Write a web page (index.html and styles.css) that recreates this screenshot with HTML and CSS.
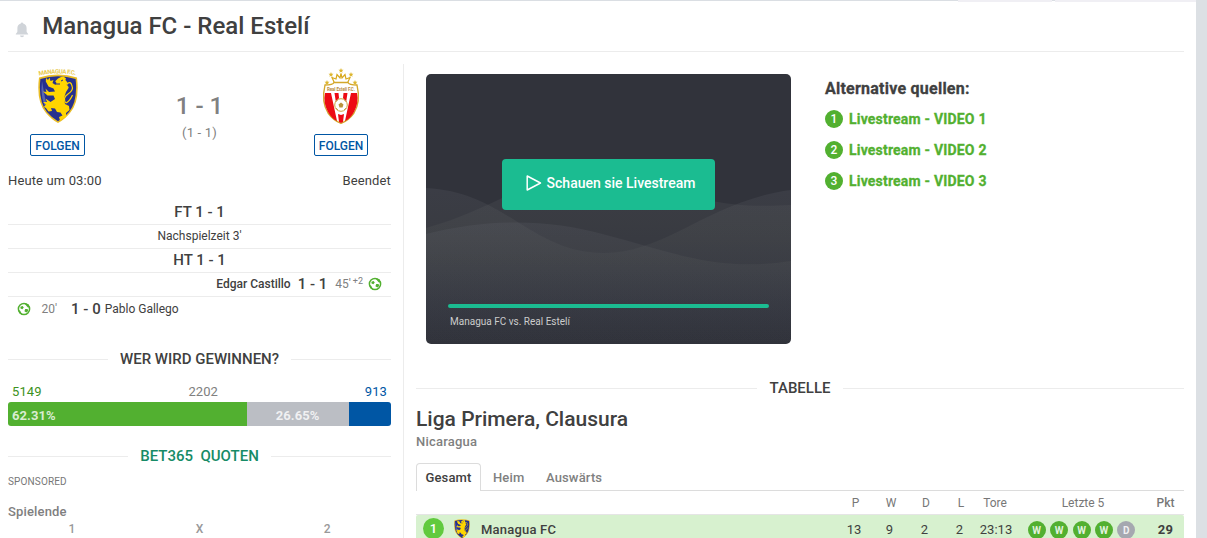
FILE: index.html
```html
<!DOCTYPE html>
<html lang="de">
<head>
<meta charset="utf-8">
<title>Managua FC - Real Estelí</title>
<link rel="stylesheet" href="styles.css">
</head>
<body>
<svg class="defs" width="0" height="0">
  <symbol id="ball" viewBox="0 0 14 14">
    <circle cx="7" cy="7" r="5.600" fill="#fff" stroke="#52b030" stroke-width="1.500"/>
    <path d="M3.400 4.800 5.600 4 6.800 5.600 5.400 7.300 3.500 6.600zM8.200 7 10.600 7 11.200 9 9.400 10.600 7.400 9.200zM7 1 11.400 2.200 13 5.800 10.600 5.200 8.900 3.200zM1 7.500 3.200 8.800 5.200 12.800 2.200 11z" fill="#52b030"/>
  </symbol>
  <symbol id="lion" viewBox="0 0 40 50">
    <path d="M1 3.5Q20-2.5 39 3.5Q42 28 32 39Q26 46 20 49Q14 46 8 39Q-2 28 1 3.5z" fill="#e9bd27"/>
    <path d="M2.400 5Q20-.5 37.600 5Q40 27 31 38Q26 44 20 47.300Q14 44 9 38Q0 27 2.400 5z" fill="#26308e"/>
    <path d="M4 7Q1.500 26 10 37L7 24z" fill="#5965b0"/>
    <path d="M20 4.500 23 3 25.500 2.600 28 4.500 27.400 6 29.500 8.500 28.500 11 30.500 14 28 18 26 24 27 30 31 32 31.500 36 28 39 28 43 22 46.500 21 43 24.500 41.500 22.500 38.500 19 38 17 34.500 13 34 14 37 10.500 37.500 8 34 5.800 33 8 30.500 5 28 9 28 7.500 24.500 12.500 28 17 25 15.500 21.500 9.500 21.500 5 17.500 8.500 18 7.500 14.500 11 18 17 17.500 15.500 14.500 10.500 12.500 7.800 7.500 8 4 10 6 11.500 3.500 12.500 7 15.500 6 14.500 9 17.500 11 18.500 9 17.200 7.200z" fill="#ffd500"/>
    <path d="M28 29Q24 24 30 20T34 12Q33 7 29.500 9.500Q27.500 12 30.500 13.500M28 29Q32 27 34.500 21" fill="none" stroke="#ffd500" stroke-width="1.200"/>
    <path d="M18 10h4M23 7l2-1" stroke="#26308e" stroke-width="1"/>
  </symbol>
</svg>
<div class="page">
  <div class="topline"><i class="topline-a"></i><i class="topline-b"></i></div>
  <header class="header">
    <svg class="bell" width="14" height="16" viewBox="0 0 14 16"><path d="M7 .5a1.200 1.200 0 0 1 1.200 1.100C10.600 2.200 11.600 4 11.600 6v3.500c0 1.200 1.700 1.800 1.700 3H.7c0-1.200 1.700-1.800 1.700-3V6c0-2 1-3.800 3.400-4.400A1.200 1.200 0 0 1 7 .5z" fill="#d0d4d9"/><path d="M5 13.500h4a2 1.800 0 0 1-4 0z" fill="#d0d4d9"/></svg>
    <h1>Managua FC - Real Estelí</h1>
  </header>
  <div class="columns">
    <section class="left">
      <div class="match">
        <div class="team">
          <svg width="50" height="60" viewBox="0 0 50 60">
            <defs><path id="arc" d="M6 9.500Q25 5.500 46 9.500"/></defs>
            <text class="crest-name" textLength="37"><textPath href="#arc" textLength="37">MANAGUA F.C.</textPath></text>
            <use href="#lion" x="5" y="8" width="40" height="50"/>
          </svg>
          <button class="follow">FOLGEN</button>
        </div>
        <div class="score"><b>1 - 1</b><span>(1 - 1)</span></div>
        <div class="team">
          <svg width="50" height="60" viewBox="0 0 50 60">
            <g fill="#ddb62e"><path d="M25 2l.7 1.700 1.800.1-1.400 1.200.5 1.800-1.600-1-1.600 1 .5-1.800-1.400-1.200 1.800-.1z"/><path id="st" d="M15 6l.7 1.700 1.800.1-1.400 1.200.5 1.800-1.600-1-1.600 1 .5-1.800-1.400-1.200 1.800-.1z"/><use href="#st" x="20"/><use href="#st" x="-4" y="8"/><use href="#st" x="24" y="8"/></g>
            <path d="M18.500 17 16 11.500 20 13 21 8.500 24 12 25 7.500 26 12 29 8.500 30 13 34 11.500 31.500 17z" fill="#fff" stroke="#d8a91d" stroke-width="1.200"/>
            <path d="M9 19Q17 19 18 16.500H32Q33 19 41 19Q45 36 38 47Q33 54 25 57.500Q17 54 12 47Q5 36 9 19z" fill="#fff" stroke="#d3a72b" stroke-width="1.300"/>
            <path d="M9 27h6l6 28Q16 53 12 46Q7 37 9 27zM41 27h-6l-6 28Q34 53 38 46Q43 37 41 27zM18.500 27h4l.5 5-3 5zM31.500 27h-4l-.5 5 3 5zM22 48l3 1 3-1-1 8-2 1-2-1z" fill="#ed0b13"/>
            <circle cx="25" cy="39" r="6.300" fill="#fff" stroke="#cda53c"/>
            <path d="M25 36.500l2.500 2-1 3h-3L22.500 38.500z" fill="#b9923b"/>
            <path d="M19.500 36l2-2M30.500 36l-2-2M20 42l2 2M30 42l-2 2" stroke="#b9923b" stroke-width=".8"/>
            <text class="crest-name crest-gold" x="11" y="24.500" textLength="28">Real Estelí F.C.</text>
          </svg>
          <button class="follow follow-away">FOLGEN</button>
        </div>
      </div>
      <div class="status"><span>Heute um 03:00</span><span>Beendet</span></div>
      <div class="events">
        <div class="event period">FT 1 - 1</div>
        <div class="event note">Nachspielzeit 3'</div>
        <div class="event period">HT 1 - 1</div>
        <div class="event away"><strong>Edgar Castillo</strong><b>1 - 1</b><span class="minute">45'<sup>+2</sup></span><svg width="14" height="14"><use href="#ball"/></svg></div>
        <div class="event home"><svg width="14" height="14"><use href="#ball"/></svg><span class="minute">20'</span><b>1 - 0</b><span>Pablo Gallego</span></div>
      </div>
      <h2 class="rule vote-title">WER WIRD GEWINNEN?</h2>
      <div class="counts"><span class="c1">5149</span><span>2202</span><span class="c2">913</span></div>
      <div class="bar"><div class="bar-home" style="width:62.31%">62.31%</div><div class="bar-draw" style="width:26.65%">26.65%</div><div class="bar-away"></div></div>
      <h2 class="rule odds-title">BET365&nbsp; QUOTEN</h2>
      <div class="sponsored">SPONSORED</div>
      <div class="market">Spielende</div>
      <div class="odds"><span>1</span><span>X</span><span>2</span></div>
      <div class="odds-box"></div>
    </section>
    <section class="right">
      <div class="media">
        <div class="player">
          <svg class="waves" width="365" height="270" viewBox="0 0 365 270">
            <defs><linearGradient id="g" x2="0" y2="1"><stop offset="0" stop-color="#6c6e7a" stop-opacity=".17"/><stop offset=".3" stop-color="#686b68" stop-opacity=".15"/><stop offset="1" stop-color="#555b70" stop-opacity="0"/></linearGradient></defs>
            <g fill="url(#g)">
              <path d="M0 114C80 118 105 179 178 179C240 179 285 126 365 116V270H0z"/>
              <path d="M0 154C70 135 105 99 170 98C235 96 250 138 365 131V270H0z"/>
              <path d="M0 160C60 145 120 144 180 161C240 176 290 199 365 187V270H0z"/>
            </g>
          </svg>
          <button class="watch"><svg width="18" height="18" viewBox="0 0 18 18"><path d="M2.200 2v14L15.500 9z" fill="none" stroke="#fff" stroke-width="1.500" stroke-linejoin="round"/></svg>Schauen sie Livestream</button>
          <div class="progress"></div>
          <div class="caption">Managua FC vs. Real Estelí</div>
        </div>
        <div class="sources">
          <h3>Alternative quellen:</h3>
          <a><i>1</i>Livestream - VIDEO 1</a>
          <a><i>2</i>Livestream - VIDEO 2</a>
          <a><i>3</i>Livestream - VIDEO 3</a>
        </div>
      </div>
      <h2 class="rule table-title">TABELLE</h2>
      <h3 class="league">Liga Primera, Clausura</h3>
      <div class="country">Nicaragua</div>
      <nav class="tabs"><span class="tab active">Gesamt</span><span class="tab heim">Heim</span><span class="tab">Auswärts</span></nav>
      <div class="trow thead"><span></span><span></span><span></span><span class="col">P</span><span class="col">W</span><span class="col">D</span><span class="col">L</span><span>Tore</span><span>Letzte 5</span><span class="pkt">Pkt</span></div>
      <div class="trow tbody"><span><i class="rank">1</i></span><span><svg width="16" height="20"><use href="#lion" width="16" height="20"/></svg></span><span class="club">Managua FC</span><span>13</span><span>9</span><span>2</span><span>2</span><span class="goals">23:13</span><span class="form"><i>W</i><i>W</i><i>W</i><i>W</i><i class="draw">D</i></span><span class="pts">29</span></div>
    </section>
  </div>
</div>
</body>
</html>
```
FILE: styles.css
```css
* { box-sizing: border-box; }
html, body { margin: 0; height: 538px; overflow: hidden; }
body { background: #dce0e4; color: #404040; font: 13px/16px Roboto, sans-serif; }
h1, h2, h3 { margin: 0; }
button { font-family: inherit; }
i { font-style: normal; }
.defs { position: absolute; }
svg { flex: none; display: block; }
.page { width: 1196px; height: 538px; background: #fff; overflow: hidden; }
.topline { display: flex; gap: 3px; height: 1px; background: #dadee3; padding-left: 958px; align-items: flex-start; }
.topline i { height: 2px; background: #f0eff4; flex: none; }
.topline-a { width: 94px; }
.topline-b { width: 141px; }
.header { margin: 0 12px 0 8px; height: 51px; border-bottom: 1px solid #ececec; display: flex; padding-left: 7px; }
.bell { margin-top: 21px; }
h1 { font-size: 24px; font-weight: 500; line-height: 28px; margin: 11px 0 0 13.300px; }
.columns { display: flex; padding: 12px 12px 0 8px; }
.left { width: 396px; height: 474px; padding-right: 12px; border-right: 1px solid #ececec; flex: none; }
.right { width: 780px; padding-left: 12px; flex: none; }
.match { display: flex; justify-content: space-between; height: 104px; padding: 0 23px 0 22px; }
.team { display: flex; flex-direction: column; align-items: center; width: 55px; padding-top: 2px; }
.follow { margin-top: 8px; width: 55px; height: 22px; padding: 1px 0 0; border: 1px solid #0056a4; border-radius: 2px; background: #fff; color: #0056a4; font-size: 12px; font-weight: 500; line-height: 20px; }
.follow-away { width: 54px; margin-left: 1px; }
.crest-name { font-size: 6px; font-weight: 700; fill: #e8c94e; }
.crest-gold { font-size: 4.500px; fill: #b88d3e; }
.score { display: flex; flex-direction: column; align-items: center; color: #808080; padding: 28px 0 0 1px; }
.score b { font-size: 24px; font-weight: 500; line-height: 28px; }
.score span { font-size: 13px; line-height: 16px; margin-top: 5px; letter-spacing: .2px; }
.status { display: flex; justify-content: space-between; margin-top: 5px; height: 28px; letter-spacing: .13px; }
.events { height: 148px; }
.event { height: 24px; line-height: 22px; border-bottom: 1px solid #ececec; display: flex; align-items: center; justify-content: center; font-size: 12px; padding-bottom: 1px; }
.event b, .period { font-size: 15px; font-weight: 500; }
.event strong { font-weight: 500; }
.away { justify-content: flex-end; padding-right: 9px; }
.away b { margin: 0 8px 0 7px; }
.away svg { margin-left: 5px; }
.home { justify-content: flex-start; padding: 0 0 1px 8.500px; border: 0; }
.home .minute { margin: 0 14px 0 11px; }
.home b { margin-right: 4px; }
.minute { color: #808080; }
sup { font-size: 9px; line-height: 0; margin-left: 2px; vertical-align: 4px; }
.rule { display: flex; align-items: center; gap: 12px; font-size: 15px; font-weight: 500; line-height: 20px; white-space: nowrap; }
.rule::before, .rule::after { content: ""; height: 1px; flex: 1; background: #ececec; }
.counts { display: flex; justify-content: space-between; padding: 0 4px; margin-top: 15px; height: 18px; color: #808080; letter-spacing: .1px; }
.c1 { color: #3c9220; }
.c2 { color: #0056a4; }
.bar { display: flex; height: 24px; border-radius: 3px; overflow: hidden; color: #ffffffc8; font-weight: 700; line-height: 27px; letter-spacing: .1px; }
.bar-home { background: #52b030; padding-left: 4px; }
.bar-draw { background: #bbbec4; text-align: center; }
.bar-away { background: #0056a4; flex: 1; }
.odds-title { margin-top: 20px; color: #168b66; }
.sponsored { font-size: 10px; line-height: 12px; margin-top: 10px; color: #777; letter-spacing: .15px; }
.market { font-weight: 500; margin-top: 16px; color: #808080; letter-spacing: .15px; }
.odds { display: grid; grid-template-columns: repeat(3, 1fr); text-align: center; color: #999; font-weight: 500; font-size: 12px; line-height: 18px; }
.odds-box { width: 36px; height: 1px; background: #ececec; margin: 0 auto; }
.media { display: flex; height: 314px; padding: 10px 0 0 10px; }
.player { width: 365px; height: 270px; border-radius: 5px; background: #31333b; position: relative; overflow: hidden; padding: 85px 22px 0; }
.waves { position: absolute; left: 0; top: 0; }
.watch { position: relative; width: 213px; height: 51px; margin-left: 54px; border: 0; border-radius: 4px; background: #1bbc91; color: #fff; font-size: 14px; font-weight: 500; padding: 0 0 3px 3px; display: flex; align-items: center; justify-content: center; gap: 4px; line-height: 20px; }
.progress { position: relative; height: 4px; border-radius: 2px; background: #1bbc91; margin-top: 94px; width: 321px; }
.caption { position: relative; margin: 7px 0 0 2px; color: #ccc; font-size: 10px; line-height: 14px; }
.sources { margin-left: 34px; display: flex; flex-direction: column; }
.sources h3 { font-size: 16px; line-height: 20px; margin: 5px 0; letter-spacing: .24px; -webkit-text-stroke: .3px; }
.sources a { display: flex; align-items: center; height: 31px; margin-top: -0.200px; color: #52b030; font-size: 14px; font-weight: 700; gap: 6px; letter-spacing: .19px; -webkit-text-stroke: .3px; }
.sources a i { width: 18px; height: 18px; border-radius: 50%; background: #52b030; color: #fff; font-size: 12px; font-weight: 500; text-align: center; line-height: 18px; letter-spacing: 0; -webkit-text-stroke: 0; }
.league { font-size: 21px; font-weight: 500; line-height: 24px; margin-top: 9px; }
.country { margin-top: 3px; color: #808080; font-weight: 500; letter-spacing: .2px; }
.tabs { display: flex; height: 41px; padding-top: 13px; color: #808080; font-weight: 500; letter-spacing: .15px; background: linear-gradient(#dcdcdc, #dcdcdc) 0 100% / 100% 1px no-repeat; }
.tab { height: 28px; line-height: 30px; }
.active { width: 65px; line-height: 28px; text-align: center; background: #fff; color: #404040; border: 1px solid #dcdcdc; border-bottom: 0; border-radius: 4px 4px 0 0; }
.heim { margin: 0 21.500px 0 12px; }
.trow { display: grid; grid-template-columns: 36px 29px 355px 36px 35px 35px 35px 36px 140px 31px; height: 24px; align-items: center; text-align: center; }
.thead { font-size: 12px; color: #777; border-bottom: 1px solid #e5e5e5; }
.col { padding-left: 3px; }
.pkt { font-weight: 500; margin-left: -6px; }
.tbody { background: #d7f1cf; height: 30px; border-radius: 2px; }
.tbody svg { margin: -2px 0 0 2px; }
.goals { padding-left: 2px; }
.club { text-align: left; font-weight: 500; letter-spacing: .2px; }
.rank { display: block; width: 21px; height: 21px; border-radius: 50%; background: #61ca3e; color: #fff; line-height: 21px; margin: -4px 0 0 7px; font-weight: 500; }
.form { display: flex; justify-content: center; gap: 4.400px; margin-left: -3px; }
.form i { width: 18px; height: 18px; line-height: 19px; border-radius: 50%; background: #52b030; color: #ffffffd8; font-size: 10px; font-weight: 700; }
.form .draw { background: #a5a8b0; }
.pts { font-weight: 700; margin-left: -6px; letter-spacing: .2px; }
```
